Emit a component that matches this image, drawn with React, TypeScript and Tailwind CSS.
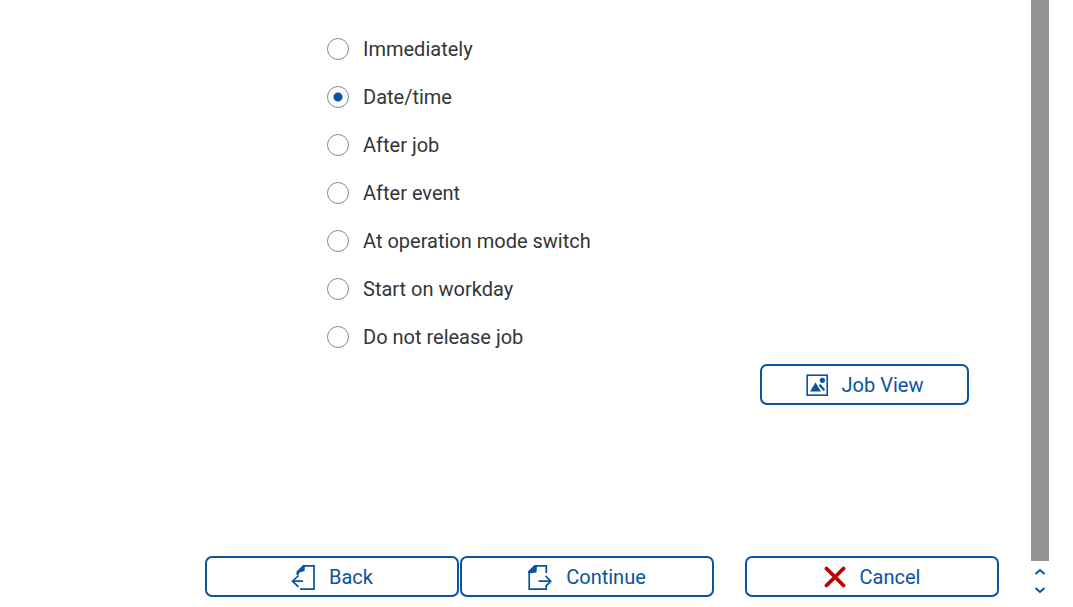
import { useState, type ReactNode } from "react";

const options = [
  "Immediately",
  "Date/time",
  "After job",
  "After event",
  "At operation mode switch",
  "Start on workday",
  "Do not release job",
];

function ActionButton({ icon, label, className }: { icon: ReactNode; label: string; className: string }) {
  return (
    <button
      type="button"
      className={`flex h-[41px] items-center justify-center gap-[14px] rounded-[7px] border-2 border-[#0854a0] bg-white text-xl text-[#0854a0] hover:bg-[#ebf5fe] ${className}`}
    >
      {icon}
      <span>{label}</span>
    </button>
  );
}

function PictureIcon() {
  return (
    <svg width="22" height="22" viewBox="0 0 22 22" aria-hidden="true">
      <rect x="1.200" y="1.200" width="20" height="20" fill="none" stroke="#0854a0" strokeWidth="1.600" />
      <path d="M4 17.500L9.500 8.500l5.500 9z" fill="#0854a0" />
      <path d="M13.500 10.800l4.800 5.400" stroke="#0854a0" strokeWidth="2.300" />
      <circle cx="16.400" cy="6.300" r="2.600" fill="#0854a0" />
    </svg>
  );
}

function BackIcon() {
  return (
    <svg width="24" height="26" viewBox="0 0 24 26" aria-hidden="true">
      <path d="M5.500 11V7.500L12 1h2l-.500 6-5 1.500-1 2.500z" fill="#0854a0" />
      <path d="M12 1.900h11v23.200H9M1.500 17.200H12M7.500 11.500L1.500 17.200l6 5.700" fill="none" stroke="#0854a0" strokeWidth="1.700" />
    </svg>
  );
}

function ContinueIcon() {
  return (
    <svg width="24" height="26" viewBox="0 0 24 26" aria-hidden="true">
      <path d="M.300 9.500V7L6.500 1H9l-.500 7.500z" fill="#0854a0" />
      <path d="M7 1.900h11.300V9M1.200 7v18.100h17.100V22M10.500 17.200H22.500M17.500 11.800l5.200 5.400-5.200 5.400" fill="none" stroke="#0854a0" strokeWidth="1.700" />
    </svg>
  );
}

function CancelIcon() {
  return (
    <svg width="22" height="22" viewBox="0 0 22 22" aria-hidden="true">
      <path d="M2.500 2.500l17 17M19.500 2.500l-17 17" fill="none" stroke="#b00" strokeWidth="3.800" strokeLinecap="round" />
    </svg>
  );
}

export default function App() {
  const [selected, setSelected] = useState("Date/time");

  return (
    <div className="flex min-h-screen bg-white pr-6 font-['Roboto',sans-serif] text-xl text-[#32363a]">
      <main className="flex min-w-0 flex-1 flex-col pb-[10px]">
        <div role="radiogroup" aria-label="Start condition" className="flex flex-col pt-[25px] pl-[327px]">
          {options.map((option) => (
            <label key={option} className="flex h-12 items-center gap-[14px]">
              <input
                type="radio"
                name="start"
                checked={selected === option}
                onChange={() => setSelected(option)}
                className="size-[22px] shrink-0 appearance-none rounded-full border border-[#758ca4] bg-white checked:bg-[radial-gradient(circle,#0854a0_4px,transparent_5px)]"
              />
              <span>{option}</span>
            </label>
          ))}
        </div>
        <div className="flex justify-end pt-[3px] pr-[62px]">
          <ActionButton icon={<PictureIcon />} label="Job View" className="w-[209px]" />
        </div>
        <div className="mt-auto flex justify-end pr-8">
          <ActionButton icon={<BackIcon />} label="Back" className="w-[254px]" />
          <ActionButton icon={<ContinueIcon />} label="Continue" className="ml-px w-[254px]" />
          <ActionButton icon={<CancelIcon />} label="Cancel" className="ml-[31px] w-[254px]" />
        </div>
      </main>
      <aside className="flex w-[18px] flex-col pb-[10px]">
        <div className="flex-1 bg-[#949494]" />
        <button type="button" aria-label="Scroll up" className="flex h-[22px] items-center justify-center">
          <svg width="12" height="8" viewBox="0 0 12 8" aria-hidden="true">
            <path d="M1.500 6L6 2l4.500 4" fill="none" stroke="#0854a0" strokeWidth="1.900" />
          </svg>
        </button>
        <button type="button" aria-label="Scroll down" className="flex h-[14px] items-center justify-center">
          <svg width="12" height="8" viewBox="0 0 12 8" aria-hidden="true">
            <path d="M1.500 2L6 6l4.500-4" fill="none" stroke="#0854a0" strokeWidth="1.900" />
          </svg>
        </button>
      </aside>
    </div>
  );
}
